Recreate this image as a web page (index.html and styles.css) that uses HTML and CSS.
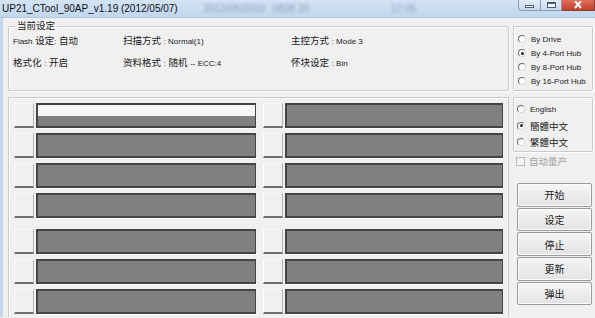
FILE: index.html
```html
<!DOCTYPE html>
<html lang="zh-CN">
<head>
    <meta charset="UTF-8">
    <meta name="viewport" content="width=device-width">
    <title>UP21_CTool_90AP_v1.19</title>
    <link rel="stylesheet" href="styles.css">
</head>
<body>
<div class="window">
    <div class="titlebar">
        <span class="title">UP21_CTool_90AP_v1.19 (2012/05/07)</span>
        <span class="smudge s1">2012/05/2010</span>
        <span class="smudge s2">0838 20</span>
        <span class="smudge s3">17:05</span>
        <div class="caption">
            <span class="cap-btn cap-min"><i></i></span>
            <span class="cap-btn cap-max"><i></i></span>
            <span class="cap-btn cap-close">
                <svg width="10" height="9" viewBox="0 0 10 9"><path d="M2 0 L8 7 M8 0 L2 7" stroke="#fff" stroke-width="2"/></svg>
            </span>
        </div>
    </div>
    <div class="client">
        <div class="top">
            <fieldset class="box settings">
                <legend>当前设定</legend>
                <div class="info">
                    <span><span class="en">Flash</span> 设定<span class="en">:</span> 自动</span>
                    <span>扫描方式 <span class="en">: Normal(1)</span></span>
                    <span>主控方式 <span class="en">: Mode 3</span></span>
                    <span>格式化 <span class="en">:</span> 开启</span>
                    <span>资料格式 <span class="en">:</span> 随机 <span class="en">-- ECC:4</span></span>
                    <span>怀块设定 <span class="en">: Bin</span></span>
                </div>
            </fieldset>
            <fieldset class="box mode">
                <label class="radio"><span class="dot"></span>By Drive</label>
                <label class="radio on"><span class="dot"></span>By 4-Port Hub</label>
                <label class="radio"><span class="dot"></span>By 8-Port Hub</label>
                <label class="radio"><span class="dot"></span>By 16-Port Hub</label>
            </fieldset>
        </div>
        <div class="bottom">
            <div class="panel">
                <div class="slots">
                    <div class="slot"><span class="port"></span><span class="bar active"></span></div>
                    <div class="slot"><span class="port"></span><span class="bar"></span></div>
                    <div class="slot"><span class="port"></span><span class="bar"></span></div>
                    <div class="slot"><span class="port"></span><span class="bar"></span></div>
                    <div class="slot"><span class="port"></span><span class="bar"></span></div>
                    <div class="slot"><span class="port"></span><span class="bar"></span></div>
                    <div class="slot"><span class="port"></span><span class="bar"></span></div>
                    <div class="slot"><span class="port"></span><span class="bar"></span></div>
                </div>
                <div class="slots">
                    <div class="slot"><span class="port"></span><span class="bar"></span></div>
                    <div class="slot"><span class="port"></span><span class="bar"></span></div>
                    <div class="slot"><span class="port"></span><span class="bar"></span></div>
                    <div class="slot"><span class="port"></span><span class="bar"></span></div>
                    <div class="slot"><span class="port"></span><span class="bar"></span></div>
                    <div class="slot"><span class="port"></span><span class="bar"></span></div>
                </div>
            </div>
            <div class="side">
                <fieldset class="box lang">
                    <label class="radio"><span class="dot"></span><span class="en">English</span></label>
                    <label class="radio on"><span class="dot"></span>簡體中文</label>
                    <label class="radio"><span class="dot"></span>繁體中文</label>
                </fieldset>
                <label class="check"><span class="tick"></span>自动量产</label>
                <div class="buttons">
                    <button>开始</button>
                    <button>设定</button>
                    <button>停止</button>
                    <button>更新</button>
                    <button>弹出</button>
                </div>
            </div>
        </div>
    </div>
</div>
</body>
</html>
```

FILE: styles.css
```css
*{
    margin: 0;
    padding: 0;
    box-sizing: border-box;
}
html,body{
    width: 595px;
    height: 318px;
    overflow: hidden;
}
body{
    background-color: #f0f0f0;
    font-family: "Liberation Sans", "Noto Sans CJK SC", sans-serif;
    font-size: 9.5px;
    color: #1a1a1a;
}
.en{
    font-size: 8px;
}

/* title bar */
.titlebar{
    height: 18px;
    display: flex;
    align-items: center;
    background: linear-gradient(#d3e3f5, #c1d6ee);
    border-bottom: 1px solid #b4c9e2;
}
.title{
    margin-left: 2px;
    font-size: 10px;
    color: #111;
    white-space: nowrap;
}
.smudge{
    color: #8ba0b9;
    font-size: 10px;
    filter: blur(1.4px);
    white-space: nowrap;
}
.s1{ margin-left: 26px; }
.s2{ margin-left: 8px; }
.s3{ margin-left: 82px; }
.caption{
    margin-left: auto;
    align-self: flex-start;
    display: flex;
    height: 11px;
}
.cap-btn{
    height: 11px;
    display: flex;
    align-items: center;
    justify-content: center;
    border: 1px solid #8a9cb3;
    border-top: none;
}
.cap-min,.cap-max{
    background: linear-gradient(#e3ecf7, #c9d8ea);
}
.cap-min{
    width: 23px;
    border-radius: 0 0 0 4px;
}
.cap-max{
    width: 21px;
    border-left: none;
}
.cap-min i{
    width: 9px;
    height: 3px;
    border: 1px solid #4a5a70;
    background: #fff;
    margin-top: 2px;
}
.cap-max i{
    width: 9px;
    height: 6px;
    border: 1px solid #4a5a70;
    border-top-width: 2px;
    background: #fff;
}
.cap-close{
    width: 33px;
    background: linear-gradient(#e0705e, #c4402a);
    border-color: #8e3a2e;
    border-left: none;
}

/* client area */
.client{
    border-left: 3px solid #c3d7ee;
    padding: 2px 2px 0 5px;
}
.top{
    display: flex;
    align-items: flex-start;
}
.box{
    border: 1px solid #c6ccd2;
    border-radius: 2px;
    box-shadow: inset 1px 1px 0 #fff, 1px 1px 0 #fff;
}
.box legend{
    padding: 0 2px;
    margin-left: 2px;
    line-height: 12px;
    font-size: 9.5px;
}
.settings{
    width: 501px;
    height: 71px;
    padding: 2px 4px 0;
}
.info{
    display: grid;
    grid-template-columns: 110px 168px auto;
    row-gap: 7px;
    line-height: 14px;
    white-space: nowrap;
}
.mode{
    width: 80px;
    height: 65px;
    margin-left: 4px;
    margin-top: 6px;
    padding: 5px 0 0 4px;
}
.mode .radio{
    height: 14px;
    font-size: 8px;
}

.radio{
    display: flex;
    align-items: center;
    white-space: nowrap;
}
.dot{
    width: 8px;
    height: 8px;
    border-radius: 50%;
    border: 1px solid;
    border-color: #6d6d6d #d8d8d8 #d8d8d8 #6d6d6d;
    background: #fff;
    margin-right: 5px;
    display: flex;
    align-items: center;
    justify-content: center;
    flex-shrink: 0;
}
.radio.on .dot::after{
    content: "";
    width: 3px;
    height: 3px;
    border-radius: 50%;
    background: #222;
}

/* lower half */
.bottom{
    display: flex;
    align-items: flex-start;
    margin-top: 6px;
}
.panel{
    width: 501px;
    height: 220px;
    border: 1px solid #c6ccd2;
    border-bottom: none;
    box-shadow: inset 1px 1px 0 #fff;
    padding: 5px 4px 0 5px;
    display: flex;
    flex-direction: column;
    gap: 11px;
}
.slots{
    display: grid;
    grid-template-columns: 242px 240px;
    column-gap: 7px;
    row-gap: 5px;
}
.slot{
    display: flex;
    gap: 2px;
    height: 25px;
}
.port{
    width: 20px;
    border: 1px solid;
    border-color: #f8f8f8 #b4b4b4 #6f6f6f #fff;
    border-bottom-width: 2px;
    background: #f0f0f0;
}
.bar{
    flex: 1;
    background: #808080;
    border: 2px solid #444;
    border-right-width: 1px;
    box-shadow: 0 1px 0 #fff;
}
.bar.active{
    background: linear-gradient(#f6f6f6 0 11px, #808080 11px);
}

.side{
    width: 80px;
    margin-left: 4px;
}
.lang{
    height: 55px;
    padding: 3px 0 0 3px;
}
.lang .radio{
    height: 16.5px;
}
.check{
    display: flex;
    align-items: center;
    height: 14px;
    margin-top: 2px;
    padding-left: 3px;
    color: #a4a4a4;
}
.tick{
    width: 9px;
    height: 9px;
    border: 1px solid #b8b8b8;
    background: #f4f4f4;
    margin-right: 4px;
}
.buttons{
    display: flex;
    flex-direction: column;
    gap: 1px;
    margin-top: 15px;
    padding-left: 4px;
}
.buttons button{
    width: 75px;
    height: 23.7px;
    font-family: "Liberation Sans", "Noto Sans CJK SC", sans-serif;
    font-size: 10px;
    color: #1a1a1a;
    border: 1px solid #9a9a9a;
    border-radius: 2px;
    background: linear-gradient(#f6f6f6, #e2e2e2);
    box-shadow: inset 0 0 0 1px #fbfbfb;
}
```
